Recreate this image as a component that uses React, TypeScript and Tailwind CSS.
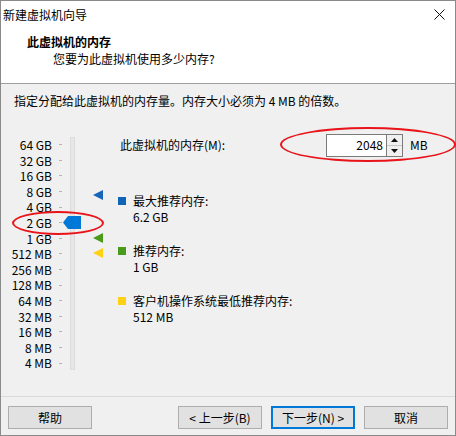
import React from 'react'

const sizes = [
  '64 GB', '32 GB', '16 GB', '8 GB', '4 GB', '2 GB', '1 GB',
  '512 MB', '256 MB', '128 MB', '64 MB', '32 MB', '16 MB', '8 MB', '4 MB',
]

const legend = [
  { color: 'bg-[#0f64b4]', label: '最大推荐内存:', value: '6.2 GB' },
  { color: 'bg-[#4a9a1c]', label: '推荐内存:', value: '1 GB' },
  { color: 'bg-[#fcd116]', label: '客户机操作系统最低推荐内存:', value: '512 MB' },
]

function Marker({ top, fill }: { top: number; fill: string }) {
  return (
    <svg
      className="absolute left-[92px]"
      style={{ top }}
      width="10"
      height="10"
      viewBox="0 0 10 10"
      aria-hidden
    >
      <polygon points="0,5 10,0 10,10" fill={fill} />
    </svg>
  )
}

function WizardButton({ children, primary }: { children: React.ReactNode; primary?: boolean }) {
  return (
    <button
      className={
        'h-[23px] w-[84px] bg-[#e1e1e1] text-[12px] leading-[16px] text-black ' +
        (primary ? 'border border-[#0078d7] shadow-[inset_0_0_0_1px_#0078d7]' : 'border border-[#adadad]')
      }
    >
      {children}
    </button>
  )
}

export default function App() {
  return (
    <div className="flex h-[436px] w-[456px] flex-col border border-[#8a8a8a] bg-[#f0f0f0] font-['Noto_Sans_CJK_SC','Noto_Sans',sans-serif] text-[12px] leading-[16px] text-black">
      {/* title bar */}
      <div className="flex h-[27px] items-center justify-between bg-white pl-[2px] pr-[10px]">
        <span>新建虚拟机向导</span>
        <svg width="11" height="11" viewBox="0 0 11 11" aria-hidden>
          <path d="M0.5 0.5 L10.5 10.5 M10.5 0.5 L0.5 10.5" stroke="#111" strokeWidth="1" />
        </svg>
      </div>

      {/* header */}
      <div className="h-[56px] border-b border-[#a0a0a0] bg-white pl-[26px] pt-[6px]">
        <div className="font-bold">此虚拟机的内存</div>
        <div className="mt-px pl-[26px]">您要为此虚拟机使用多少内存?</div>
      </div>

      {/* body */}
      <div className="flex-1 border-b border-[#dadada] pl-[13px] pt-[9px]">
        <p>指定分配给此虚拟机的内存量。内存大小必须为 4 MB 的倍数。</p>

        <div className="relative -ml-[13px] mt-[21px] flex">
          {/* slider */}
          <div className="relative flex w-[117px] pt-[7px]">
            <div className="flex w-[61px] flex-col">
              {sizes.map((s) => (
                <div key={s} className="flex h-[15.6px] items-center justify-end text-[12px] leading-[15.6px]">
                  <span className="w-[51px] text-right">{s}</span>
                  <span className="ml-[7px] h-px w-[3px] bg-[#b4b4b4]" />
                </div>
              ))}
            </div>
            <div className="ml-[8px] h-[233px] w-[5px] border border-[#dcdcdc] bg-[#e7e7e7]" />

            <svg
              className="absolute left-[62px] top-[86px]"
              width="18"
              height="13"
              viewBox="0 0 18 13"
              aria-hidden
            >
              <polygon points="0,6.5 5,0 18,0 18,13 5,13" fill="#0078d7" />
            </svg>
            <Marker top={60} fill="#1565b8" />
            <Marker top={103} fill="#4a9a1c" />
            <Marker top={118} fill="#fcd116" />

            {/* annotation */}
            <div className="absolute left-[11px] top-[81px] h-[24px] w-[92px] rounded-[50%] border-2 border-[#e8141a]" />
          </div>

          {/* right pane */}
          <div className="relative flex flex-1 flex-col pt-[1px]">
            <div className="flex h-[28px] items-center">
              <span className="w-[208px] pl-[2px]">此虚拟机的内存(M):</span>
              <div className="flex h-[23px]">
                <div className="flex w-[61px] items-center justify-end border border-[#7a7a7a] bg-white pr-[3px]">
                  2048
                </div>
                <div className="flex w-[16px] flex-col border-y border-r border-[#7a7a7a] bg-white">
                  <div className="flex flex-1 items-center justify-center border-b border-[#c8c8c8] bg-[#f0f0f0]">
                    <svg width="7" height="4" viewBox="0 0 7 4" aria-hidden>
                      <polygon points="0,4 3.5,0 7,4" fill="#111" />
                    </svg>
                  </div>
                  <div className="flex flex-1 items-center justify-center bg-[#f0f0f0]">
                    <svg width="7" height="4" viewBox="0 0 7 4" aria-hidden>
                      <polygon points="0,0 3.5,4 7,0" fill="#111" />
                    </svg>
                  </div>
                </div>
                <span className="ml-[7px] self-center">MB</span>
              </div>
            </div>

            <div className="mt-[34px] flex flex-col gap-[18px]">
              {legend.map((l) => (
                <div key={l.label} className="flex">
                  <span className={'mt-[4px] h-[8px] w-[8px] ' + l.color} />
                  <div className="ml-[7px]">
                    <div>{l.label}</div>
                    <div>{l.value}</div>
                  </div>
                </div>
              ))}
            </div>

            {/* annotation */}
            <div className="absolute -top-[3px] left-[162px] h-[35px] w-[176px] rounded-[50%] border-2 border-[#e8141a]" />
          </div>
        </div>
      </div>

      {/* footer */}
      <div className="flex h-[38px] items-start px-[7px] pt-[9px]">
        <WizardButton>帮助</WizardButton>
        <div className="ml-auto flex gap-[9px]">
          <WizardButton>&lt; 上一步(B)</WizardButton>
          <WizardButton primary>下一步(N) &gt;</WizardButton>
          <WizardButton>取消</WizardButton>
        </div>
      </div>
    </div>
  )
}
